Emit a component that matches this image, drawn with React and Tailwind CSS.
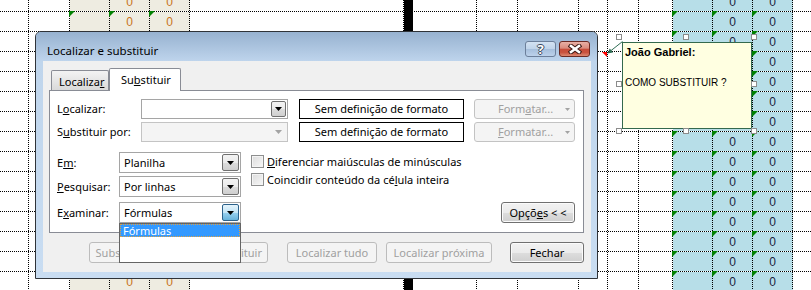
import React from 'react';

const COLS = [
  { w: 'w-[29px]' },
  { w: 'w-[41px]' },
  { w: 'w-[40px]', bg: 'bg-[#eeece1]', tri: true },
  { w: 'w-[40px]', bg: 'bg-[#eeece1]', tri: true, zero: 'text-[#c8741c]', under: true },
  { w: 'w-[40px]', bg: 'bg-[#eeece1]', tri: true, zero: 'text-[#c8741c]', under: true },
  { w: 'w-[214px]' },
  { black: true },
  { w: 'w-[64px]' },
  { w: 'w-[41px]' },
  { w: 'w-[61px]' },
  { w: 'w-[29px]', note: true },
  { w: 'w-[31px]' },
  { w: 'w-[34px]' },
  { w: 'w-[40px]', bg: 'bg-[#b7dee8]', tri: true },
  { w: 'w-[40px]', bg: 'bg-[#b7dee8]', tri: true, zero: 'text-[#1b2440]' },
  { w: 'w-[40px]', bg: 'bg-[#b7dee8]', tri: true, zero: 'text-[#1b2440]' },
  { w: 'w-[30px]' },
];

function Sheet() {
  return (
    <div className="-mt-[8px] flex flex-col font-['Liberation_Sans',Arial,sans-serif] text-[12px]">
      {Array.from({ length: 15 }).map((_, r) => (
        <div key={r} className="flex h-[20px] border-b border-dotted border-black">
          {COLS.map((c, i) =>
            c.black ? (
              <div key={i} className="h-[20px] w-[9px] shrink-0 self-start bg-black" />
            ) : (
              <div
                key={i}
                className={`relative flex shrink-0 items-end justify-center border-r border-dotted border-black pb-[3px] leading-none ${c.w} ${c.bg || ''}`}
              >
                {c.tri && r > 0 && (
                  <span className="absolute -left-px -top-px h-0 w-0 border-r-[6px] border-t-[6px] border-r-transparent border-t-[#008000]" />
                )}
                {c.zero && !(c.under && r > 1 && r < 14) && <span className={c.zero}>0</span>}
                {c.note && r === 3 && (
                  <span className="absolute right-0 top-0 h-0 w-0 border-l-[5px] border-t-[5px] border-l-transparent border-t-[#ff0000]" />
                )}
              </div>
            )
          )}
        </div>
      ))}
    </div>
  );
}

function Arrow({ disabled }) {
  return (
    <svg width="7" height="4" viewBox="0 0 7 4">
      <path d="M0 0h7L3.5 4z" fill={disabled ? '#a3a3a3' : '#000'} />
    </svg>
  );
}

function Combo({ w, h, value, editable, disabled, focused }) {
  let box = 'border-[#a5a5a5] bg-white';
  if (disabled) box = 'border-[#c4c4c4] bg-[#f4f4f4]';
  let btn = 'border-[#707070] bg-[linear-gradient(#f3f3f3_0%,#ebebeb_50%,#dcdcdc_51%,#cfcfcf_100%)]';
  if (focused) btn = 'border-[#2c628b] bg-[linear-gradient(#e5f4fc_0%,#c4e5f6_50%,#98d1ef_51%,#68b3db_100%)]';
  return (
    <div className={`flex shrink-0 border ${box} ${w} ${h}`}>
      <div className="flex flex-1 items-center pl-[4px] leading-[16px]">{value}</div>
      {disabled ? (
        <div className="flex w-[17px] items-center justify-center">
          <Arrow disabled />
        </div>
      ) : (
        <div
          className={`m-px flex items-center justify-center rounded-[2px] border ${btn} ${editable ? 'w-[15px]' : 'w-[17px]'}`}
        >
          <Arrow />
        </div>
      )}
    </div>
  );
}

function Btn({ w, disabled, children, className = '' }) {
  const look = disabled
    ? 'border-[#bcbcbc] bg-[#f4f4f4] text-[#a0a0a0]'
    : 'border-[#707070] bg-[linear-gradient(#f2f2f2_0%,#ebebeb_50%,#dddddd_51%,#cfcfcf_100%)] shadow-[inset_0_0_0_1px_#fbfbfb] text-black';
  return (
    <div className={`flex h-[21px] shrink-0 items-center justify-center rounded-[3px] border leading-[16px] ${look} ${w} ${className}`}>
      {children}
    </div>
  );
}

function FormatBtn({ children }) {
  return (
    <div className="ml-[10px] flex h-[20px] w-[101px] shrink-0 items-center rounded-[3px] border border-[#c3c3c3] bg-[#f4f4f4] pl-[23px] pr-[4px] leading-[16px] text-[#a0a0a0]">
      <span>{children}</span>
      <span className="ml-auto">
        <svg width="5" height="3" viewBox="0 0 5 3">
          <path d="M0 0h5L2.5 3z" fill="#a3a3a3" />
        </svg>
      </span>
    </div>
  );
}

function NoFormat() {
  return (
    <div className="ml-[11px] flex h-[20px] w-[165px] shrink-0 items-center justify-center border border-black bg-white leading-[16px]">
      Sem definição de formato
    </div>
  );
}

function Check({ children }) {
  return (
    <div className="flex h-[13px] items-center">
      <span className="h-[13px] w-[13px] shrink-0 border border-[#8e8f8f] bg-[linear-gradient(135deg,#dcdcdc,#f7f7f7)] shadow-[inset_0_0_0_1px_#f4f4f4]" />
      <span className="ml-[3px] whitespace-nowrap leading-[16px]">{children}</span>
    </div>
  );
}

function Dialog() {
  return (
    <div className="absolute left-[35px] top-[31px] flex h-[248px] w-[563px] flex-col overflow-hidden rounded-t-[6px] border border-[#2f3338] bg-[#c3d8ee] font-['Noto_Sans',sans-serif] text-[11px] text-black">
      <div className="flex h-[29px] shrink-0 items-start bg-gradient-to-b from-[#97b2d0] to-[#bed4ec] pl-[11px] pr-[7px]">
        <span className="mt-[11px] text-[11.5px] leading-[16px]">Localizar e substituir</span>
        <div className="ml-auto mt-[9px] flex gap-[3px]">
          <div className="flex h-[16px] w-[31px] items-center justify-center rounded-[3px] border border-[#6c7f9a] bg-[linear-gradient(#d3e2f2_0%,#c0d4ea_50%,#a6bfdc_51%,#bcd1ea_100%)] text-[13px] font-bold leading-none text-white [text-shadow:1px_0_#3b4a5e,-1px_0_#3b4a5e,0_1px_#3b4a5e,0_-1px_#3b4a5e]">
            ?
          </div>
          <div className="flex h-[16px] w-[31px] items-center justify-center rounded-[3px] border border-[#6b2a23] bg-[linear-gradient(#e8b0a5_0%,#d98a7c_45%,#c64c39_50%,#c9533f_75%,#dc8a73_100%)]">
            <svg width="14" height="10" viewBox="0 0 14 10">
              <path d="M3 2l8 6M11 2L3 8" stroke="#3d1a15" strokeWidth="4.6" strokeLinecap="square" />
              <path d="M3 2l8 6M11 2L3 8" stroke="#fff" strokeWidth="2.6" strokeLinecap="square" />
            </svg>
          </div>
        </div>
      </div>
      <div className="flex-1 bg-gradient-to-b from-[#bfd5ec] to-[#c9ddf2] pb-[6px] pl-[7px] pr-[6px]">
        <div className="h-[211px] bg-[#f0f0f0] pl-[6px] pt-[7px]">
          <div className="flex h-[22px] items-end pl-[2px]">
            <div className="h-[20px] w-[58px] rounded-t-[2px] border border-b-0 border-[#898c95] bg-[linear-gradient(#f3f3f3,#d9d9d9)] pl-[7px] pt-[3px] leading-[16px]">
              Localiza<span className="underline">r</span>
            </div>
            <div className="relative z-10 -mb-px h-[23px] w-[72px] rounded-t-[2px] border border-b-0 border-[#898c95] bg-white pl-[11px] pt-[3px] leading-[16px]">
              Su<span className="underline">b</span>stituir
            </div>
          </div>
          <div className="h-[143px] w-[535px] border border-[#898c95] bg-white">
            <div className="mt-[8px] flex h-[20px] items-center">
              <div className="w-[91px] shrink-0 pl-[7px] leading-[16px]">
                L<span className="underline">o</span>calizar:
              </div>
              <Combo w="w-[147px]" h="h-[20px]" value="" editable />
              <NoFormat />
              <FormatBtn>
                Form<span className="underline">a</span>tar...
              </FormatBtn>
            </div>
            <div className="mt-[3px] flex h-[20px] items-center">
              <div className="w-[91px] shrink-0 pl-[7px] leading-[16px]">
                S<span className="underline">u</span>bstituir por:
              </div>
              <Combo w="w-[147px]" h="h-[20px]" value="" disabled />
              <NoFormat />
              <FormatBtn>
                <span className="underline">F</span>ormatar...
              </FormatBtn>
            </div>
            <div className="mt-[10px] flex">
              <div className="flex w-[191px] shrink-0 flex-col">
                <div className="flex h-[21px] items-center">
                  <div className="w-[69px] shrink-0 pl-[7px] leading-[16px]">
                    E<span className="underline">m</span>:
                  </div>
                  <Combo w="w-[122px]" h="h-[21px]" value="Planilha" />
                </div>
                <div className="mt-[3px] flex h-[21px] items-center">
                  <div className="w-[69px] shrink-0 pl-[7px] leading-[16px]">
                    <span className="underline">P</span>esquisar:
                  </div>
                  <Combo w="w-[122px]" h="h-[21px]" value="Por linhas" />
                </div>
                <div className="mt-[5px] flex h-[21px] items-center">
                  <div className="w-[69px] shrink-0 pl-[7px] leading-[16px]">
                    E<span className="underline">x</span>aminar:
                  </div>
                  <Combo w="w-[122px]" h="h-[21px]" value="Fórmulas" focused />
                </div>
              </div>
              <div className="ml-[10px] flex flex-col gap-[5px] pt-[3px]">
                <Check>
                  <span className="underline">D</span>iferenciar maiúsculas de minúsculas
                </Check>
                <Check>
                  Coincidir conteúdo da cé<span className="underline">l</span>ula inteira
                </Check>
              </div>
              <Btn w="w-[74px]" className="ml-auto mr-[8px] self-end">
                Opçõ<span className="underline">e</span>s &lt; &lt;
              </Btn>
            </div>
          </div>
          <div className="mt-[9px] flex pl-[40px]">
            <Btn w="w-[90px]" disabled>
              Substituir tudo
            </Btn>
            <Btn w="w-[80px]" disabled className="ml-[9px] !justify-end pr-[5px]">
              Substituir
            </Btn>
            <Btn w="w-[90px]" disabled className="ml-[19px]">
              Localizar tudo
            </Btn>
            <Btn w="w-[106px]" disabled className="ml-[9px]">
              Localizar próxima
            </Btn>
            <Btn w="w-[74px]" className="ml-[18px]">
              Fechar
            </Btn>
          </div>
        </div>
      </div>
    </div>
  );
}

function DropList() {
  return (
    <div className="absolute left-[119px] top-[223px] h-[40px] w-[122px] border border-[#646464] bg-white font-['Noto_Sans',sans-serif] text-[11px]">
      <div className="flex h-[13px] items-center border border-dotted border-[#e0a040] bg-[#3399ff] pl-[2px] leading-[13px] text-white">
        Fórmulas
      </div>
    </div>
  );
}

function Note() {
  const handles = [
    [616, 34], [683, 34], [751, 34],
    [616, 81], [751, 81],
    [616, 128], [683, 128], [751, 128],
  ];
  return (
    <>
      <svg className="absolute left-[600px] top-[36px]" width="26" height="22" viewBox="0 0 26 22">
        <path d="M22.5 5.5L10.5 15" stroke="#2f6e55" strokeWidth="1" />
        <path d="M7.5 17.5L13 16.4L9.8 12.4z" fill="#2f6e55" />
      </svg>
      <div className="absolute left-[622px] top-[42px] h-[87px] w-[130px] border border-[#34694d] bg-[#ffffe1] pl-[2px] pt-[2px] font-['Liberation_Sans',Arial,sans-serif] text-black">
        <div className="text-[11px] font-bold leading-[14px]">João Gabriel:</div>
        <div className="mt-[17px] text-[10px] leading-[14px]">COMO SUBSTITUIR ?</div>
      </div>
      {handles.map(([x, y], i) => (
        <span
          key={i}
          className="absolute h-[6px] w-[6px] border border-[#8c8c8c] bg-white"
          style={{ left: x, top: y }}
        />
      ))}
    </>
  );
}

export default function App() {
  return (
    <div className="relative h-[290px] w-[811px] overflow-hidden bg-white">
      <Sheet />
      <Note />
      <Dialog />
      <DropList />
    </div>
  );
}
